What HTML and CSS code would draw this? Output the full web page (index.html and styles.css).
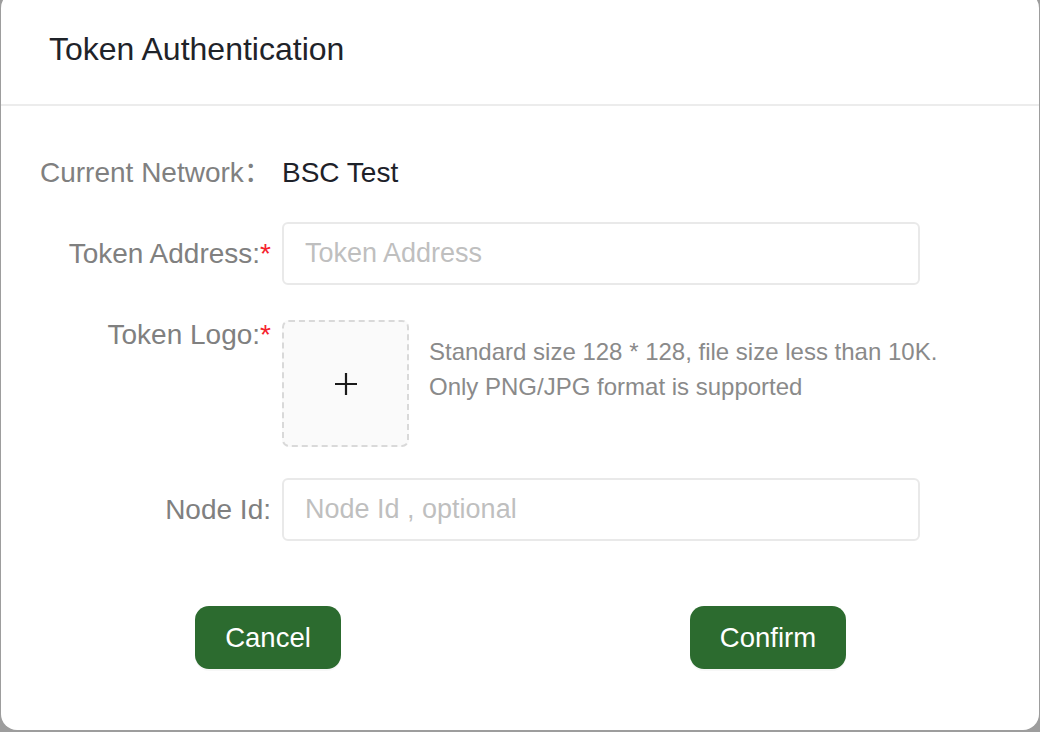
FILE: index.html
```html
<!DOCTYPE html>
<html lang="en">
<head>
<meta charset="utf-8">
<title>Token Authentication</title>
<link rel="stylesheet" href="styles.css">
</head>
<body>
<div class="modal">
  <div class="modal-header">Token Authentication</div>
  <div class="modal-body">
    <div class="form-row row-info">
      <div class="form-label">Current Network：</div>
      <div class="form-value">BSC Test</div>
    </div>
    <div class="form-row row-input">
      <div class="form-label">Token Address:<span class="req">*</span></div>
      <input class="text-input" type="text" placeholder="Token Address">
    </div>
    <div class="form-row row-upload">
      <div class="form-label">Token Logo:<span class="req">*</span></div>
      <div class="upload-wrap">
        <div class="upload-box">
          <svg width="24" height="24" viewBox="0 0 24 24" aria-hidden="true"><path d="M12 1v22M1 12h22" stroke="#1a1a1a" stroke-width="2.2" fill="none"/></svg>
        </div>
        <div class="upload-hint">
          <div>Standard size 128 * 128, file size less than 10K.</div>
          <div>Only PNG/JPG format is supported</div>
        </div>
      </div>
    </div>
    <div class="form-row row-input">
      <div class="form-label">Node Id:</div>
      <input class="text-input" type="text" placeholder="Node Id , optional">
    </div>
    <div class="modal-footer">
      <button class="btn" type="button">Cancel</button>
      <button class="btn" type="button">Confirm</button>
    </div>
  </div>
</div>
</body>
</html>
```
FILE: styles.css
```css
html, body {
  margin: 0;
  padding: 0;
}
body {
  background: #9d9d9d;
  height: 732px;
  overflow: hidden;
  font-family: "Liberation Sans", Arial, "Noto Sans CJK SC", sans-serif;
}
.modal {
  margin: -8px 0 0 1px;
  width: 1038px;
  height: 738px;
  background: #ffffff;
  border-radius: 16px;
  display: flex;
  flex-direction: column;
}
.modal-header {
  height: 114px;
  box-sizing: border-box;
  border-bottom: 2px solid #ececec;
  padding-left: 48px;
  padding-top: 2px;
  display: flex;
  align-items: center;
  font-size: 32px;
  color: #1f2329;
}
.modal-body {
  padding: 52px 0 0 39px;
}
.form-row {
  display: grid;
  grid-template-columns: 231px 638px;
  column-gap: 11px;
}
.form-label {
  text-align: right;
  font-size: 28px;
  color: #808080;
  white-space: nowrap;
}
.req {
  color: #f5222d;
}
.row-info {
  line-height: 30px;
  margin-bottom: 34px;
}
.row-info .form-label {
  text-align: left;
}
.form-value {
  font-size: 28px;
  color: #1d2129;
}
.row-input {
  margin-bottom: 35px;
}
.row-input .form-label {
  line-height: 63px;
}
.row-upload {
  margin-bottom: 31px;
}
.row-upload .form-label {
  line-height: 30px;
}
.text-input {
  height: 63px;
  box-sizing: border-box;
  border: 2px solid #e9e9e9;
  border-radius: 6px;
  padding: 0 21px;
  font-family: "Liberation Sans", Arial, sans-serif;
  font-size: 27px;
  color: #1d2129;
  outline: none;
  margin: 0;
  width: 100%;
}
.text-input::placeholder {
  color: #bfbfbf;
}
.upload-wrap {
  display: flex;
  gap: 20px;
}
.upload-box {
  width: 127px;
  height: 127px;
  box-sizing: border-box;
  border: 2px dashed #d9d9d9;
  border-radius: 7px;
  background: #fafafa;
  display: flex;
  align-items: center;
  justify-content: center;
  flex: none;
}
.upload-hint {
  padding-top: 14px;
  font-size: 24px;
  line-height: 35px;
  color: #8a8a8a;
  white-space: nowrap;
}
.modal-footer {
  display: grid;
  grid-template-columns: 1fr 1fr;
  justify-items: center;
  margin: 65px 0 0 -39px;
  padding: 0 21px 0 17px;
  width: 1000px;
}
.btn {
  height: 63px;
  padding: 0 30px;
  border: none;
  border-radius: 14px;
  background: #2c6b2f;
  color: #ffffff;
  font-family: "Liberation Sans", Arial, sans-serif;
  font-size: 27.5px;
  box-shadow: 0 2px 0 rgba(0, 0, 0, 0.03);
}
```
